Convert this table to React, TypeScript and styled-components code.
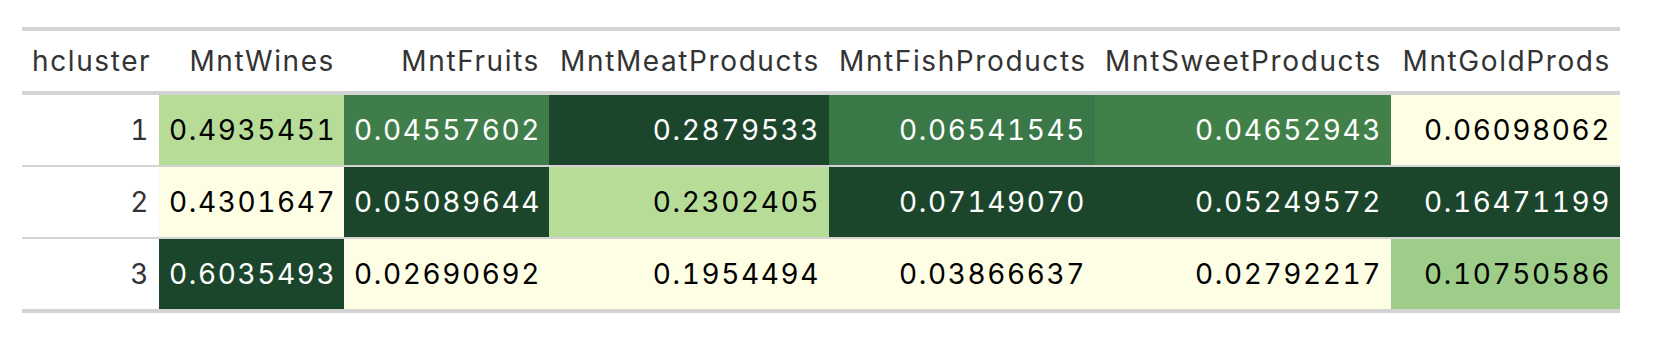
import React from 'react';
import styled, { createGlobalStyle } from 'styled-components';

const GlobalStyle = createGlobalStyle`
	body {
		margin: 0;
		background: #ffffff;
		font-family: Inter, "Liberation Sans", sans-serif;
	}
`

const IVORY = '#FEFEE5';
const LIGHT = '#B7DC98';
const PALE = '#9ECD89';
const MID = '#3F7E4A';
const MID2 = '#3A7847';
const MID3 = '#418149';
const DARK = '#1C462B';

const darkShades = [MID, MID2, MID3, DARK];

const columns = [
	{ key: 'hcluster', width: 137 },
	{ key: 'MntWines', width: 185 },
	{ key: 'MntFruits', width: 205 },
	{ key: 'MntMeatProducts', width: 280 },
	{ key: 'MntFishProducts', width: 266 },
	{ key: 'MntSweetProducts', width: 296 },
	{ key: 'MntGoldProds', width: 229 },
];

const rows = [
	{
		id: 1,
		cells: [
			{ value: '0.4935451', bg: LIGHT },
			{ value: '0.04557602', bg: MID },
			{ value: '0.2879533', bg: DARK },
			{ value: '0.06541545', bg: MID2 },
			{ value: '0.04652943', bg: MID3 },
			{ value: '0.06098062', bg: IVORY },
		],
	},
	{
		id: 2,
		cells: [
			{ value: '0.4301647', bg: IVORY },
			{ value: '0.05089644', bg: DARK },
			{ value: '0.2302405', bg: LIGHT },
			{ value: '0.07149070', bg: DARK },
			{ value: '0.05249572', bg: DARK },
			{ value: '0.16471199', bg: DARK },
		],
	},
	{
		id: 3,
		cells: [
			{ value: '0.6035493', bg: DARK },
			{ value: '0.02690692', bg: IVORY },
			{ value: '0.1954494', bg: IVORY },
			{ value: '0.03866637', bg: IVORY },
			{ value: '0.02792217', bg: IVORY },
			{ value: '0.10750586', bg: PALE },
		],
	},
];

const App = () => {
	return (
		<>
			<GlobalStyle />
			<Page>
				<Table>
					<colgroup>
						{columns.map(c => <Col key={c.key} $w={c.width} />)}
					</colgroup>
					<thead>
						<tr>
							{columns.map(c => <HeadCell key={c.key}>{c.key}</HeadCell>)}
						</tr>
					</thead>
					<tbody>
						{rows.map((r, i) => (
							<tr key={r.id}>
								<IndexCell $last={i === rows.length - 1}>{r.id}</IndexCell>
								{r.cells.map((cell, j) => (
									<ValueCell
										key={j}
										$bg={cell.bg}
										$dark={darkShades.includes(cell.bg)}
										$last={i === rows.length - 1}>
										{cell.value}
									</ValueCell>
								))}
							</tr>
						))}
					</tbody>
				</Table>
			</Page>
		</>
	)
}

export default App;


const Page = styled.div`
	padding: 27px 0 0 22px;
`

const Table = styled.table`
	width: 1598px;
	table-layout: fixed;
	border-collapse: separate;
	border-spacing: 0;
	font-family: Inter, "Liberation Sans", sans-serif;
	font-size: 28px;
	font-variant-numeric: tabular-nums;
	letter-spacing: 1.6px;
`

const Col = styled.col<{ $w: number }>`
	width: ${p => p.$w}px;
`

const HeadCell = styled.th`
	height: 60px;
	padding: 0 9px 0 10px;
	text-align: right;
	font-weight: 400;
	color: #333333;
	white-space: nowrap;
	border-top: 4px solid #D3D3D3;
	border-bottom: 4px solid #D3D3D3;

	&:first-child {
		text-align: left;
	}
`

const BodyCell = styled.td<{ $last?: boolean }>`
	height: 70px;
	padding: 0 9px 0 10px;
	text-align: right;
	white-space: nowrap;
	border-bottom: ${p => (p.$last ? '4px' : '2px')} solid #D3D3D3;
`

const IndexCell = styled(BodyCell)`
	color: #333333;
	background: #ffffff;
`

const ValueCell = styled(BodyCell)<{ $bg: string; $dark: boolean }>`
	background: ${p => p.$bg};
	color: ${p => (p.$dark ? '#ffffff' : '#000000')};
`
